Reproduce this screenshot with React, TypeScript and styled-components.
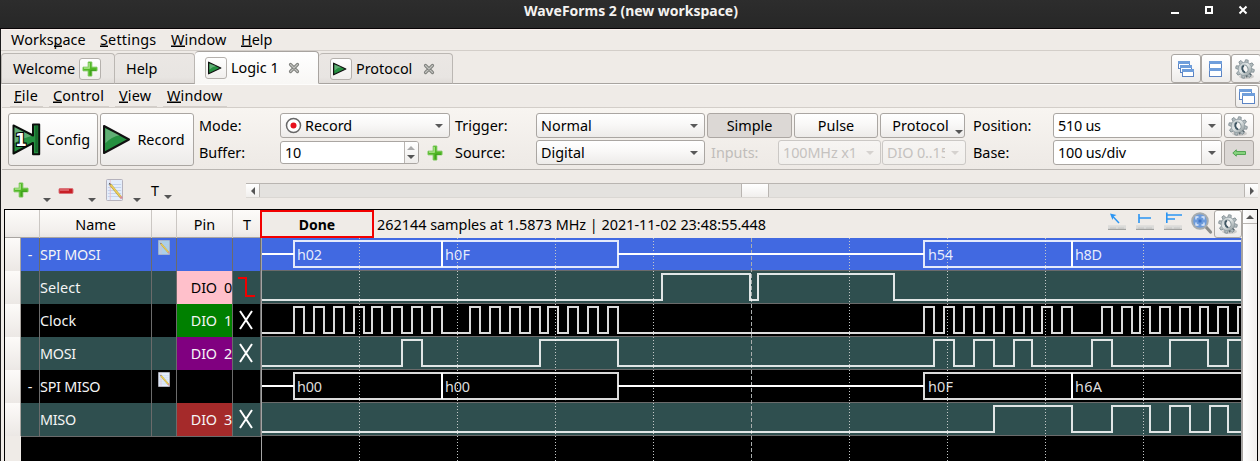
import React from "react";
import styled, { createGlobalStyle } from "styled-components";

const Global = createGlobalStyle`
  * { box-sizing: border-box; }
  body { margin: 0; overflow: hidden; }
`;

const Frame = styled.div`
  width: 1260px;
  height: 461px;
  overflow: hidden;
  display: flex;
  flex-direction: column;
  background: #efebe7;
  color: #000;
  font: 14.4px/20px "Noto Sans", sans-serif;
`;

const Label = styled.span<{ $ls?: number; $w?: number }>`
  white-space: nowrap;
  flex: none;
  letter-spacing: ${(p) => p.$ls ?? 0}px;
  ${(p) => p.$w !== undefined && `width: ${p.$w}px;`}
`;

const TitleBar = styled.header`
  height: 29px;
  flex: none;
  display: grid;
  grid-template-columns: 524px 644px 92px;
  background: linear-gradient(#2d2d2d, #272727);
  border-bottom: 1px solid #080406;
  color: #f4f2f0;
  font-size: 14px;
  font-weight: 700;
  line-height: 22px;
`;

const WindowButtons = styled.svg`
  grid-column: 3;
  width: 92px;
  height: 24px;
`;

const Body = styled.div`
  flex: 1;
  min-height: 0;
  border-left: 1px solid #1c1c1c;
  display: flex;
  flex-direction: column;
`;

const MenuBar = styled.nav`
  height: 22px;
  flex: none;
  display: flex;
  padding-left: 10px;
  border-bottom: 1px solid #d3cec9;
  border-top: 1px solid #f9eeea;
`;

const SubMenuBar = styled(MenuBar)`
  height: 24px;
  padding-left: 8px;
  margin-left: 1px;
  border-top-color: #fdfcfb;
  align-items: flex-start;
`;

const MenuItem = styled.span<{ $w: number; $ls: number }>`
  width: ${(p) => p.$w}px;
  white-space: nowrap;
  letter-spacing: ${(p) => p.$ls}px;
  u {
    text-decoration: none;
    box-shadow: inset 0 -2px 0 -0.5px #000;
    display: inline-block;
    height: 17px;
  }
`;

const SubItem = styled(MenuItem)<{ $gap: number }>`
  height: 22px;
  padding: 1px 0 0 4px;
  margin-right: ${(p) => p.$gap}px;
  border-bottom: 1px solid #d3cec9;
`;

const Spacer = styled.div`
  flex: 1;
`;

const TabBar = styled.div`
  height: 33px;
  flex: none;
  display: flex;
  align-items: flex-end;
  box-shadow: inset 0 -1px 0 #a8a4a0;
`;

const Tab = styled.div<{ $w: number; $active?: boolean }>`
  width: ${(p) => p.$w}px;
  height: ${(p) => (p.$active ? 33 : 31)}px;
  display: flex;
  align-items: center;
  padding: ${(p) => (p.$active ? "0" : "1px")} 0 0 11px;
  background: ${(p) =>
    p.$active ? "linear-gradient(#fff, #f8f7f5)" : "linear-gradient(#ebe7e4, #e8e5e2 80%, #e0dcd9)"};
  border: 1px solid ${(p) => (p.$active ? "#a8a4a0" : "#bbb7b3")};
  border-bottom-color: ${(p) => (p.$active ? "#f8f7f5" : "#a8a4a0")};
  border-radius: 4px 4px 0 0;
  & + & { border-left-width: ${(p) => (p.$active ? 1 : 0)}px; }
`;

const IconBox = styled.span<{ $m?: string }>`
  width: 22px;
  height: 22px;
  flex: none;
  display: flex;
  align-items: center;
  justify-content: center;
  margin: ${(p) => p.$m ?? "0"};
  border: 1px solid #b5b1ad;
  border-radius: 3px;
  background: linear-gradient(#fff, #f1efed);
`;

const Button = styled.button<{ $w: number; $h?: number; $down?: boolean; $m?: string }>`
  width: ${(p) => p.$w}px;
  height: ${(p) => p.$h ?? 25}px;
  flex: none;
  margin: ${(p) => p.$m ?? "0"};
  padding: 0;
  display: flex;
  align-items: center;
  justify-content: center;
  color: #000;
  font: inherit;
  border: 1px solid ${(p) => (p.$down ? "#aca7a3" : "#aaa6a2")};
  border-radius: 3px;
  background: ${(p) => (p.$down ? "#dcd8d5" : "linear-gradient(#fff, #f9f8f7 45%, #edebe9)")};
`;

const Toolbar = styled.section`
  height: 62px;
  flex: none;
  display: flex;
  margin-left: 1px;
  padding: 5px 0 0 6px;
  background: linear-gradient(#f8f5f1, #f0ece8 75%, #eeeae6);
  border-bottom: 1px solid #bab6b2;
`;

const Stack = styled.div<{ $w: number; $m?: number }>`
  width: ${(p) => p.$w}px;
  flex: none;
  margin-left: ${(p) => p.$m ?? 0}px;
  display: grid;
  grid-template-rows: 25px 25px;
  row-gap: 2px;
  align-items: center;
`;

const Line = styled.div`
  display: flex;
  align-items: center;
`;

const Combo = styled.div<{ $w: number; $off?: boolean; $edit?: boolean; $m?: number }>`
  width: ${(p) => p.$w}px;
  height: 25px;
  flex: none;
  display: flex;
  align-items: center;
  overflow: hidden;
  margin-left: ${(p) => p.$m ?? 0}px;
  padding-left: 4px;
  color: ${(p) => (p.$off ? "#c5c2bf" : "#000")};
  border: 1px solid ${(p) => (p.$off ? "#cbc8c5" : "#aaa6a2")};
  border-radius: 3px;
  background: ${(p) =>
    p.$edit ? "#fff" : p.$off ? "linear-gradient(#f7f5f3, #f1efec)" : "linear-gradient(#fff, #f9f8f7 45%, #edebe9)"};
`;

const Drop = styled.span<{ $off?: boolean; $edit?: boolean }>`
  align-self: stretch;
  width: 20px;
  flex: none;
  display: flex;
  align-items: center;
  justify-content: center;
  border-left: ${(p) => (p.$edit ? "1px solid #b9b5b1" : "0")};
  background: ${(p) => (p.$edit ? "linear-gradient(#fff, #efedeb)" : "none")};
  &::after {
    content: "";
    border: 4px solid transparent;
    border-bottom: 0;
    border-top: 4px solid ${(p) => (p.$off ? "#d5d2cf" : "#595959")};
  }
`;

const Clip = styled.span<{ $ls?: number }>`
  flex: 1;
  overflow: hidden;
  white-space: nowrap;
  letter-spacing: ${(p) => p.$ls ?? 0}px;
`;

const SpinBox = styled(Combo)`
  height: 23px;
`;

const Steps = styled.span`
  width: 14px;
  align-self: stretch;
  flex: none;
  border-left: 1px solid #b9b5b1;
  background: linear-gradient(#fff, #efedeb);
`;

const InputsLabel = styled.span`
  width: 71px;
  flex: none;
  padding-left: 4px;
  color: #c0bdba;
`;

const EditBar = styled.section`
  height: 39px;
  flex: none;
  display: flex;
  align-items: flex-start;
  padding-left: 13px;
`;

const ToolItem = styled.span<{ $w: number }>`
  width: ${(p) => p.$w}px;
  height: 32px;
  flex: none;
  display: flex;
`;

const TMark = styled.span`
  margin-top: 11px;
  width: 8px;
`;

const HScroll = styled.div`
  width: 1012px;
  height: 15px;
  margin-top: 13px;
  flex: none;
  display: grid;
  grid-template-columns: 14px 481px 28px 475px 14px;
  border-top: 1px solid #b9b5b1;
  background: #e4e2df;
  border-bottom: 1px solid #dad7d3;
`;

const ScrollPart = styled.span<{ $col: number; $side?: "l" | "r" | "b" }>`
  grid-column: ${(p) => p.$col};
  display: flex;
  align-items: center;
  justify-content: center;
  background: linear-gradient(#fff, #f1efed);
  border-right: ${(p) => (p.$side !== "r" ? "1px solid #b9b5b1" : "0")};
  border-left: ${(p) => (p.$side !== "l" ? "1px solid #b9b5b1" : "0")};
`;

const Panel = styled.main`
  flex: 1;
  min-height: 0;
  margin-left: 3px;
  width: 1254px;
  display: grid;
  grid-template-columns: 256px 981px 1fr;
  border: 1px solid #000;
  border-bottom: 0;
`;

const Channels = styled.div`
  display: flex;
  flex-direction: column;
  background: #000;
`;

const HeadRow = styled.div`
  height: 28px;
  flex: none;
  display: grid;
  grid-template-columns: 35px 112px 25px 56px 28px;
  background: linear-gradient(#fdfbf9, #f2efec 80%, #e9e6e3);
  text-align: center;
  line-height: 30px;
  border-bottom: 1px solid #a9a5a1;
  > span { border-right: 1px solid #cbc7c3; }
  > span:last-child { border-right: 0; }
`;

const ChannelRow = styled.div<{ $bg: string }>`
  height: 33px;
  flex: none;
  display: grid;
  grid-template-columns: 16px 19px 112px 25px 56px 28px;
  background: ${(p) => p.$bg};
  color: #f5f5f5;
  line-height: 33px;
  > span {
    border-right: 1px solid #6b6b6b;
    border-bottom: 1px solid #6b6b6b;
    white-space: pre;
  }
  > span:first-child {
    background: linear-gradient(#fdfbf9, #ece8e5);
    border-color: #aaa6a2;
  }
  > span:nth-child(2) { text-align: center; }
`;

const NameCell = styled.span<{ $ls: number }>`
  letter-spacing: ${(p) => p.$ls}px;
`;

const Pin = styled.span<{ $bg?: string; $fg?: string }>`
  background: ${(p) => p.$bg ?? "transparent"};
  color: ${(p) => p.$fg ?? "#f5f5f5"};
  text-align: right;
  letter-spacing: -0.2px;
`;

const IconCell = styled.span`
  display: flex;
`;

const RowFill = styled.div`
  flex: 1;
  width: 16px;
  background: #efebe7;
`;

const PlotArea = styled.div`
  display: flex;
  flex-direction: column;
  background: #000;
`;

const Status = styled.div`
  height: 28px;
  flex: none;
  display: flex;
  background: #efebe7;
  line-height: 30px;
`;

const Done = styled.strong`
  width: 114px;
  height: 28px;
  margin-left: -1px;
  margin-right: 3px;
  border: 2px solid #f20000;
  text-align: center;
  font-size: 14px;
  line-height: 25px;
  flex: none;
`;

const GearSlot = styled.div`
  margin-left: -29px;
`;

const VScroll = styled.div`
  background: linear-gradient(90deg, #fff, #f1efed);
  border-left: 1px solid #a9a5a1;
`;

const VUp = styled.div`
  height: 14px;
  display: flex;
  align-items: center;
  justify-content: center;
  border-bottom: 1px solid #b9b5b1;
`;

/* ---------- icons ---------- */

const Svg = styled.svg<{ $m?: string }>`
  flex: none;
  display: block;
  margin: ${(p) => p.$m ?? "0"};
`;

const Plus = ({ m }: { m?: string }) => (
  <Svg width="16" height="16" viewBox="0 0 16 16" $m={m}>
    <path d="M6.2 1h3.6v5.2H15v3.6H9.800V15H6.200V9.800H1V6.200h5.200z" fill="#52b826" stroke="#74c653" strokeWidth="1" strokeLinejoin="round" />
    <path d="M7.200 2v5.200H2" stroke="#b5e896" strokeWidth="1.200" fill="none" />
    <path d="M8.800 14.500V9.300h5.400" stroke="#399c18" strokeWidth="1" fill="none" />
  </Svg>
);

const Play = ({ w = 14, h = 14, sw = 1.2, m }: { w?: number; h?: number; sw?: number; m?: string }) => (
  <Svg width={w} height={h} viewBox={`0 0 ${w} ${h}`} $m={m}>
    <path d={`M${sw / 2} ${sw} L${w - sw} ${h / 2} L${sw / 2} ${h - sw}z`} fill="#259040" stroke="#111" strokeWidth={sw} strokeLinejoin="round" />
    <path d={`M${sw * 1.2} ${sw * 2.2} L${w * 0.6} ${h * 0.36} Q${w * 0.3} ${h * 0.4} ${sw * 1.2} ${h * 0.62}z`} fill="#fff" opacity=".28" />
  </Svg>
);

const Single = ({ m }: { m?: string }) => (
  <Svg width="29" height="33" viewBox="0 0 29 33" $m={m}>
    <path d="M1.500 2.500L21 12.500V1.500h6.200v29.800H21V20L1.500 30.500z" fill="#259040" stroke="#0a0f0b" strokeWidth="2" strokeLinejoin="round" />
    <path d="M2.500 4l17 9q-9 2-17 7z" fill="#fff" opacity=".28" />
    <path d="M24.500 3v26" stroke="#176b2c" strokeWidth="2.500" />
    <text x="3" y="23" fontSize="17" fontWeight="700" fontFamily="DejaVu Sans" fill="#fff" stroke="#000" strokeWidth="2.200" paintOrder="stroke">1</text>
  </Svg>
);

const CloseX = ({ m }: { m?: string }) => (
  <Svg width="12" height="12" viewBox="0 0 12 12" $m={m}>
    <path d="M2.500 2.500l7 7M9.500 2.500l-7 7" stroke="#80827e" strokeWidth="3.200" strokeLinecap="round" />
    <path d="M2.500 2.500l7 7M9.500 2.500l-7 7" stroke="#c3c4c1" strokeWidth="1.100" strokeLinecap="round" />
  </Svg>
);

const teeth = Array.from({ length: 8 }, (_, i) => i * 45 + 12);
const Gear = ({ m, s = 22 }: { m?: string; s?: number }) => (
  <Svg width={s} height={s} viewBox="0 0 22 22" $m={m}>
    <defs>
      <linearGradient id="metal" x1="0" y1="0" x2="1" y2="1">
        <stop offset="0" stopColor="#b4bdc0" />
        <stop offset=".45" stopColor="#e2e7e7" />
        <stop offset="1" stopColor="#7f8b8e" />
      </linearGradient>
    </defs>
    <ellipse cx="12.500" cy="18.500" rx="7.500" ry="2.500" fill="#000" opacity=".14" />
    <g fill="#b3bcbe" stroke="#76838a" strokeWidth=".7">
      {teeth.map((a) => (
        <path key={a} d="M9 6l.7-4.300h2.600L13 6z" transform={`rotate(${a} 11 11)`} />
      ))}
    </g>
    <circle cx="11" cy="11" r="6.800" fill="url(#metal)" stroke="#87939a" strokeWidth=".6" />
    <ellipse cx="11" cy="10.800" rx="3" ry="3.800" transform="rotate(-20 11 11)" fill="#f7f6f5" stroke="#8b989d" strokeWidth="1" />
    <path d="M9.800 7.600C7.400 9 8 13.400 11 14.400" fill="none" stroke="#3f5663" strokeWidth="1.800" />
    <path d="M15.500 15.500l2 1.500M12.500 17.500l.5 2" stroke="#55646b" strokeWidth="1.200" />
  </Svg>
);

const Win = ({ x, y, w, h }: { x: number; y: number; w: number; h: number }) => (
  <g>
    <rect x={x + 0.5} y={y + 0.5} width={w - 1} height={h - 1} fill="#fff" stroke="#5b84c4" />
    <rect x={x} y={y} width={w} height="3" fill="#6f9edb" />
  </g>
);

const Cascade = () => (
  <Svg width="16" height="16" viewBox="0 0 16 16">
    <Win x={0} y={0} w={12} h={8} />
    <Win x={2} y={4} w={12} h={8} />
    <Win x={4} y={8} w={12} h={8} />
  </Svg>
);

const Tile = () => (
  <Svg width="14" height="16" viewBox="0 0 14 16">
    <Win x={0} y={0} w={13} h={8} />
    <Win x={0} y={7} w={13} h={9} />
  </Svg>
);

const Restore = () => (
  <Svg width="16" height="16" viewBox="0 0 16 16">
    <Win x={0} y={0} w={13} h={11} />
    <Win x={3} y={4} w={13} h={11} />
  </Svg>
);

const Note = ({ w, h, m, tint = "#e4edfb" }: { w: number; h: number; m?: string; tint?: string }) => (
  <Svg width={w} height={h} viewBox="0 0 18 22" preserveAspectRatio="none" $m={m}>
    <rect x=".5" y=".5" width="17" height="21" rx="1" fill={tint} stroke="#b3b0ba" />
    <path d="M2 5.500h14M2 8.500h14M2 11.500h14M2 14.500h14M2 17.500h14" stroke="#b9cdea" strokeWidth=".8" />
    <path d="M4.500 1v20" stroke="#e9b9c8" strokeWidth=".8" />
    <path d="M4.500 5.500L15.500 18" stroke="#b99c3c" strokeWidth="2.600" />
    <path d="M4.500 5.300L15.500 17.700" stroke="#ecd05c" strokeWidth="1.600" />
    <path d="M15.300 17.700l1.500 1.800" stroke="#d98f96" strokeWidth="2.600" />
    <path d="M3.500 4.200l1.200 1.500" stroke="#555" strokeWidth="1.300" />
  </Svg>
);

const Tri = ({ d, m, c = "#555" }: { d: "u" | "d" | "l" | "r"; m?: string; c?: string }) => {
  const paths = { u: "M0 4h8L4 0z", d: "M0 0h8L4 4z", l: "M4 0v8L0 4z", r: "M0 0v8l4-4z" };
  const flat = d === "u" || d === "d";
  return (
    <Svg width={flat ? 8 : 4} height={flat ? 4 : 8} $m={m}>
      <path d={paths[d]} fill={c} />
    </Svg>
  );
};

const Minus = ({ m }: { m?: string }) => (
  <Svg width="16" height="6" $m={m}>
    <rect x="1" y=".5" width="14" height="5" rx="1" fill="#c81f26" stroke="#d9737a" />
    <path d="M2 2h9" stroke="#ee9c9f" />
  </Svg>
);

const RecordDot = () => (
  <Svg width="17" height="17" $m="0 3px 0 0">
    <circle cx="8.500" cy="8.500" r="7" fill="#fff" stroke="#686868" strokeWidth="1.500" />
    <circle cx="8.500" cy="8.500" r="3" fill="#e8101c" />
  </Svg>
);

const GreenArrow = () => (
  <Svg width="14" height="8">
    <path d="M.8 4L4.300 .8V2.500H13.500V5.500H4.300V7.200z" fill="#86d27d" stroke="#4a9f4b" strokeWidth=".9" strokeLinejoin="round" />
  </Svg>
);

const Ruler = () => (
  <>
    <rect x="0" y="14.500" width="18" height="4.500" fill="#c9c9c7" />
    <path d="M1 14.500v3M3 14.500v2M5 14.500v2M7 14.500v2M9 14.500v3M11 14.500v2M13 14.500v2M15 14.500v2M17 14.500v3" stroke="#eeeeec" />
    <path d="M0 18.500h18" stroke="#a3a3a1" />
  </>
);

const MeasureIcons = () => (
  <Svg width="136" height="28">
    <g transform="translate(1 1)">
      <Ruler />
      <path d="M11 12L3.500 4" stroke="#2b95f3" strokeWidth="1.500" fill="none" />
      <path d="M2 2.500L8.500 4L5.500 5.500L4.500 9z" fill="#2b95f3" />
    </g>
    <g transform="translate(29 1)">
      <Ruler />
      <path d="M3 3v9M3 7h12" stroke="#2b95f3" strokeWidth="1.600" fill="none" />
    </g>
    <g transform="translate(57 1)">
      <Ruler />
      <path d="M2.800 1.500v10.500M2 4h16M3 8h8" stroke="#2b95f3" strokeWidth="1.600" fill="none" />
    </g>
    <g>
      <path d="M99 17l4.500 5" stroke="#8a8c8a" strokeWidth="3.200" strokeLinecap="round" />
      <circle cx="93" cy="11" r="7.800" fill="#6c9bdc" stroke="#a5abae" strokeWidth="2" />
      <path d="M89 9.500V7h2.500M94.500 7H97V9.500M97 12.500V15h-2.500M91.500 15H89V12.500" stroke="#e1ebfa" strokeWidth="1.300" fill="none" />
      <rect x="91.500" y="9.500" width="3" height="3" fill="#3f74c6" />
    </g>
  </Svg>
);

/* ---------- waveform data ---------- */

const LEFT = 261;
const RIGHT = 1242;

type Edges = number[];

const clock: Edges = [
  294, 304, 314, 324, 334, 344, 354, 364, 372, 382, 392, 402, 412, 422, 432, 442,
  470, 480, 490, 500, 510, 520, 530, 540, 548, 558, 568, 578, 588, 598, 608, 618,
  924, 934, 944, 954, 964, 974, 984, 994, 1004, 1014, 1024, 1032, 1042, 1052, 1062, 1072,
  1102, 1112, 1122, 1132, 1140, 1150, 1160, 1170, 1180, 1190, 1200, 1208, 1218, 1228, 1238,
];

const lanes: { bg: string; edges?: Edges; bus?: string[] }[] = [
  { bg: "#4169e1", bus: ["h02", "h0F", "h54", "h8D"] },
  { bg: "#2f4f4f", edges: [662, 750, 758, 894] },
  { bg: "#000", edges: clock },
  { bg: "#2f4f4f", edges: [402, 422, 540, 618, 934, 954, 974, 994, 1014, 1032, 1092, 1112, 1170, 1208, 1228] },
  { bg: "#000", bus: ["h00", "h00", "h0F", "h6A"] },
  { bg: "#2f4f4f", edges: [994, 1072, 1112, 1150, 1170, 1190, 1210, 1228] },
];

const digital = (edges: Edges) => {
  let high = false;
  let d = `M${LEFT} 29`;
  for (const x of edges) {
    high = !high;
    d += `H${x}V${high ? 3 : 29}`;
  }
  return d + `H${RIGHT}`;
};

const grid = [359, 457, 555, 653, 849, 947, 1045, 1143];
const busX = [294, 442, 924, 1072];

const Waves = () => (
  <Svg width="981" height="223" viewBox="261 0 981 223">
    {lanes.map((l, i) => (
      <g key={i} transform={`translate(0 ${i * 33})`}>
        <rect x={LEFT} width="981" height="33" fill={l.bg} />
        <path d={`M${LEFT} 32.500H${RIGHT}`} stroke="#6b6b6b" />
      </g>
    ))}
    {grid.map((x) => (
      <path key={x} d={`M${x + 0.5} 0V223`} stroke="#c4c8c8" strokeDasharray="1 2" />
    ))}
    <path d="M751.500 0V223" stroke="#a9adad" strokeDasharray="4 2" />
    {lanes.map((l, i) => (
      <g key={i} transform={`translate(0 ${i * 33})`} fill="none" stroke="#fff" strokeWidth="2">
        {l.edges && <path d={digital(l.edges)} opacity=".86" />}
        {l.bus && (
          <>
            <path d="M261 16H294M618 16H924M442 3V29M1072 3V29" />
            <path d="M294 3H618V29H294zM1243 3H924V29H1243" opacity=".86" />
            {l.bus.map((t, k) => (
              <text key={k} x={busX[k] + (k === 2 ? 4 : 3)} y="22" fontSize="14.400" fill="#fff" fillOpacity=".88" stroke="none" textLength={k === 3 ? 27 : 25}>
                {t}
              </text>
            ))}
          </>
        )}
      </g>
    ))}
    <path d="M261.500 0V223M1241.500 0V223" stroke="#a5a5a5" />
  </Svg>
);

const Cross = () => (
  <Svg width="14" height="20" $m="6px 0 0 6px">
    <path d="M1 1L13 19M13 1L1 19" stroke="#fff" strokeWidth="2" />
  </Svg>
);

const Fall = () => (
  <Svg width="18" height="20" $m="6px 0 0 5px">
    <path d="M0 1H8V19H17" stroke="#f00000" strokeWidth="2" fill="none" />
  </Svg>
);

type Channel = {
  name: string;
  ls: number;
  bg: string;
  group?: boolean;
  pin?: string;
  pinBg?: string;
  pinFg?: string;
  trig?: "x" | "fall";
  tint?: string;
};

const channels: Channel[] = [
  { name: "SPI MOSI", ls: -0.25, bg: "#4169e1", group: true, tint: "#a9cfea" },
  { name: "Select", ls: 0.1, bg: "#2f4f4f", pin: "DIO  0", pinBg: "#ffc0cb", pinFg: "#000", trig: "fall" },
  { name: "Clock", ls: 0, bg: "#000", pin: "DIO  1", pinBg: "#008000", trig: "x" },
  { name: "MOSI", ls: -0.3, bg: "#2f4f4f", pin: "DIO  2", pinBg: "#800080", trig: "x" },
  { name: "SPI MISO", ls: -0.25, bg: "#000", group: true },
  { name: "MISO", ls: -0.3, bg: "#2f4f4f", pin: "DIO  3", pinBg: "#a52a2a", trig: "x" },
];

export default function App() {
  return (
    <Frame>
      <Global />
      <TitleBar>
        <Label />
        <Label $ls={-0.02}>WaveForms 2 (new workspace)</Label>
        <WindowButtons viewBox="0 0 92 24">
          <rect x="3" y="12" width="8" height="2" fill="#fff" />
          <rect x="38" y="7" width="6" height="6" fill="none" stroke="#fff" strokeWidth="2" />
          <path d="M71.500 6.500l7 7M78.500 6.500l-7 7" stroke="#fff" strokeWidth="2" />
        </WindowButtons>
      </TitleBar>
      <Body>
        <MenuBar>
          <MenuItem $w={89} $ls={0.05}>Works<u>p</u>ace</MenuItem>
          <MenuItem $w={71} $ls={0.2}><u>S</u>ettings</MenuItem>
          <MenuItem $w={70} $ls={0.15}><u>W</u>indow</MenuItem>
          <MenuItem $w={40} $ls={0}><u>H</u>elp</MenuItem>
        </MenuBar>
        <TabBar>
          <Tab $w={114}>
            <Label $w={66}>Welcome</Label>
            <IconBox><Plus /></IconBox>
          </Tab>
          <Tab $w={80}><Label>Help</Label></Tab>
          <Tab $w={124} $active>
            <IconBox $m="0 4px 0 -1px"><Play m="0 2px 0 0" /></IconBox>
            <Label $w={57}>Logic 1</Label>
            <CloseX />
          </Tab>
          <Tab $w={134}>
            <IconBox $m="0 4px 0 0"><Play m="0 2px 0 0" /></IconBox>
            <Label $w={67}>Protocol</Label>
            <CloseX />
          </Tab>
          <Spacer />
          <Button $w={30} $h={29} $m="0 0 1px 0"><Cascade /></Button>
          <Button $w={30} $h={29} $m="0 0 1px 0"><Tile /></Button>
          <Button $w={30} $h={29} $m="0 -1px 1px 0"><Gear m="0 2px 0 0" /></Button>
        </TabBar>
        <SubMenuBar>
          <SubItem $w={33} $gap={6} $ls={0.3}><u>F</u>ile</SubItem>
          <SubItem $w={60} $gap={6} $ls={0.15}><u>C</u>ontrol</SubItem>
          <SubItem $w={42} $gap={6} $ls={0.2}><u>V</u>iew</SubItem>
          <SubItem $w={64} $gap={0} $ls={0.15}><u>W</u>indow</SubItem>
          <Spacer />
          <Button $w={24} $h={23} $m="0 1px 0 0"><Restore /></Button>
        </SubMenuBar>
        <Toolbar>
          <Button $w={90} $h={53}>
            <Single m="0 5px 0 -4px" />
            <Label>Config</Label>
          </Button>
          <Button $w={94} $h={53} $m="0 0 0 2px">
            <Play w={28} h={31} sw={2} m="0 6px 0 -6px" />
            <Label>Record</Label>
          </Button>
          <Stack $w={81} $m={5}>
            <Label>Mode:</Label>
            <Label>Buffer:</Label>
          </Stack>
          <Stack $w={170}>
            <Combo $w={170}>
              <RecordDot />
              <Clip>Record</Clip>
              <Drop />
            </Combo>
            <Line>
              <SpinBox $w={139} $edit>
                <Clip $ls={-0.2}>10</Clip>
                <Steps>
                  <Tri d="u" m="4px 0 5px 2px" c="#aaa" />
                  <Tri d="d" m="0 0 0 2px" />
                </Steps>
              </SpinBox>
              <Plus m="0 0 0 8px" />
            </Line>
          </Stack>
          <Stack $w={81} $m={5}>
            <Label>Trigger:</Label>
            <Label>Source:</Label>
          </Stack>
          <Stack $w={169}>
            <Combo $w={169}><Clip>Normal</Clip><Drop /></Combo>
            <Combo $w={169}><Clip>Digital</Clip><Drop /></Combo>
          </Stack>
          <Stack $w={260} $m={2}>
            <Line>
              <Button $w={85} $down>Simple</Button>
              <Button $w={84} $m="0 2px">Pulse</Button>
              <Button $w={85}>
                <Label>Protocol</Label>
                <Tri d="d" m="13px -10px 0 6px" />
              </Button>
            </Line>
            <Line>
              <InputsLabel>Inputs:</InputsLabel>
              <Combo $w={103} $off><Clip $ls={-0.1}>100MHz x1</Clip><Drop $off /></Combo>
              <Combo $w={84} $off $m={1}><Clip $ls={-0.1}>DIO 0..15</Clip><Drop $off /></Combo>
            </Line>
          </Stack>
          <Stack $w={80} $m={6}>
            <Label>Position:</Label>
            <Label>Base:</Label>
          </Stack>
          <Stack $w={169}>
            <Combo $w={169} $edit><Clip $ls={-0.25}>510 us</Clip><Drop $edit /></Combo>
            <Combo $w={169} $edit><Clip $ls={-0.15}>100 us/div</Clip><Drop $edit /></Combo>
          </Stack>
          <Stack $w={30} $m={2}>
            <Button $w={30}><Gear m="0 2px 0 0" /></Button>
            <Button $w={30} $h={26} $down><GreenArrow /></Button>
          </Stack>
        </Toolbar>
        <EditBar>
          <ToolItem $w={45}>
            <Plus m="12px 0 0 -1px" />
            <Tri d="d" m="28px 0 0 14px" />
          </ToolItem>
          <ToolItem $w={47}>
            <Minus m="18px 0 0 -1px" />
            <Tri d="d" m="28px 0 0 14px" />
          </ToolItem>
          <ToolItem $w={45}>
            <Note w={17} h={22} m="9px 0 0 0" />
            <Tri d="d" m="28px 0 0 10px" />
          </ToolItem>
          <ToolItem $w={95}>
            <TMark>T</TMark>
            <Tri d="d" m="25px 0 0 5px" />
          </ToolItem>
          <HScroll>
            <ScrollPart $col={1} $side="l"><Tri d="l" /></ScrollPart>
            <ScrollPart $col={3} $side="b" />
            <ScrollPart $col={5} $side="r"><Tri d="r" /></ScrollPart>
          </HScroll>
        </EditBar>
        <Panel>
          <Channels>
            <HeadRow>
              <span />
              <span>Name</span>
              <span />
              <span>Pin</span>
              <span>T</span>
            </HeadRow>
            {channels.map((c) => (
              <ChannelRow key={c.name} $bg={c.bg}>
                <span />
                <span>{c.group ? "-" : ""}</span>
                <NameCell $ls={c.ls}>{c.name}</NameCell>
                <IconCell>{c.group && <Note w={12} h={15} m="2px 0 0 6px" tint={c.tint} />}</IconCell>
                <Pin $bg={c.pinBg} $fg={c.pinFg}>{c.pin}</Pin>
                <IconCell>
                  {c.trig === "x" && <Cross />}
                  {c.trig === "fall" && <Fall />}
                </IconCell>
              </ChannelRow>
            ))}
            <RowFill />
          </Channels>
          <PlotArea>
            <Status>
              <Done>Done</Done>
              <Label>262144 samples at 1.5873 MHz | 2021-11-02 23:48:55.448</Label>
              <Spacer />
              <MeasureIcons />
              <GearSlot>
                <Button $w={28} $h={28}><Gear /></Button>
              </GearSlot>
            </Status>
            <Waves />
          </PlotArea>
          <VScroll>
            <VUp><Tri d="u" /></VUp>
          </VScroll>
        </Panel>
      </Body>
    </Frame>
  );
}
